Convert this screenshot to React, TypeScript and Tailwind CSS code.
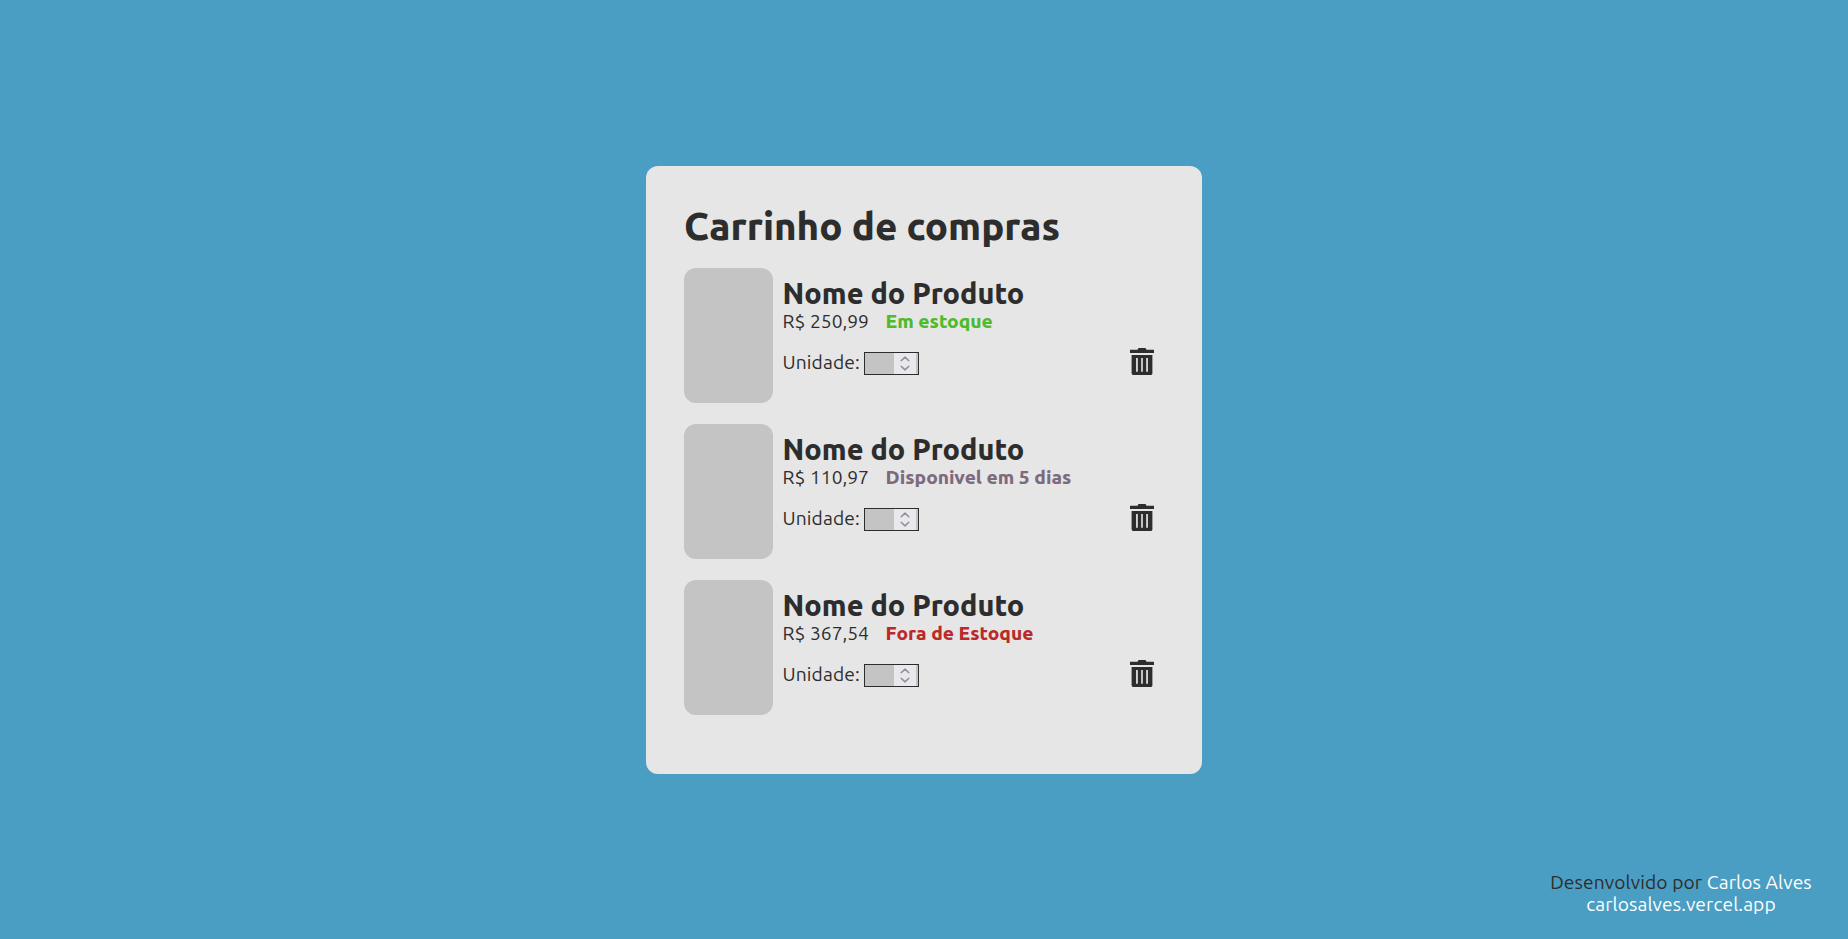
type Product = {
  id: number;
  price: string;
  status: string;
  statusClass: string;
};

const products: Product[] = [
  { id: 1, price: "R$ 250,99", status: "Em estoque", statusClass: "text-[#4fba2b]" },
  { id: 2, price: "R$ 110,97", status: "Disponivel em 5 dias", statusClass: "text-[#7d6b7d]" },
  { id: 3, price: "R$ 367,54", status: "Fora de Estoque", statusClass: "text-[#ba2a2a]" },
];

function TrashIcon() {
  return (
    <svg width="24" height="27" viewBox="0 0 24 27" fill="#2d2d2d" aria-hidden="true">
      <path d="M0 1.7H7.6C7.8.6 8.4 0 9.3 0h5.4c.9 0 1.5.6 1.7 1.7H24V5H0z" />
      <path
        fillRule="evenodd"
        d="M1.6 7h20.8v18.2c0 1.1-.7 1.8-1.8 1.8h-17c-1.1 0-1.9-.7-2-1.8zM6.1 10v13.7h1.7V10zM11.2 10v13.7h1.6V10zM16.2 10v13.7h1.7V10z"
      />
    </svg>
  );
}

function QuantityField() {
  return (
    <div className="flex h-[23px] w-[55px] border border-[#2d2d2d] bg-[#c4c4c4] pl-[29px]">
      <div className="flex h-[21px] w-[22px] items-center justify-center bg-[#e9e9ed]">
        <svg width="10" height="15" viewBox="0 0 10 15" fill="none" stroke="#8f8f9d" strokeWidth="1.5" strokeLinecap="round" strokeLinejoin="round" aria-hidden="true">
          <path d="M1.2 4.8 5 1.1l3.8 3.7M1.2 10.2 5 13.9l3.8-3.7" />
        </svg>
      </div>
    </div>
  );
}

function ProductRow({ product }: { product: Product }) {
  return (
    <li className="flex h-[135px]">
      <div className="h-[135px] w-[89px] shrink-0 rounded-xl bg-[#c4c4c4]" />
      <div className="ml-[9.6px] w-[387.4px] pt-[8px]">
        <h2 className="h-[34px] text-[28.8px] leading-[34px] font-extrabold whitespace-nowrap">Nome do Produto</h2>
        <div className="flex h-[22px] text-[19.2px] leading-[22px] whitespace-nowrap">
          <span className="w-[103px] tracking-[0.04px]">{product.price}</span>
          <span className={`font-extrabold ${product.statusClass}`}>{product.status}</span>
        </div>
        <div className="mt-[16px] flex h-[27px] items-start">
          <span className="mt-[3px] w-[81.4px] text-[19.2px] leading-[22px] tracking-[0.1px]">Unidade:</span>
          <div className="mt-[4px]"><QuantityField /></div>
          <button type="button" aria-label="Remover" className="ml-auto mr-[10px]">
            <TrashIcon />
          </button>
        </div>
      </div>
    </li>
  );
}

export default function App() {
  return (
    <div className="flex h-[939px] w-full flex-col items-center overflow-hidden bg-[#4a9ec3] pt-[166px] font-['Ubuntu','Noto_Sans',sans-serif] text-[#2d2d2d]">
      <main className="h-[608px] w-[556px] shrink-0 rounded-xl bg-[#e6e6e6] px-[38px] pt-[38px]">
        <h1 className="h-[64px] text-[38.4px] leading-[44px] font-extrabold whitespace-nowrap">Carrinho de compras</h1>
        <ul className="flex flex-col gap-[21px]">
          {products.map((product) => (
            <ProductRow key={product.id} product={product} />
          ))}
        </ul>
      </main>
      <footer className="mt-[97px] mr-[36px] flex w-[262px] flex-col items-center self-end text-[19.2px] leading-[22px] tracking-[0.12px] whitespace-nowrap">
        <p>
          Desenvolvido por <a className="text-white">Carlos Alves</a>
        </p>
        <a className="text-white">carlosalves.vercel.app</a>
      </footer>
    </div>
  );
}
